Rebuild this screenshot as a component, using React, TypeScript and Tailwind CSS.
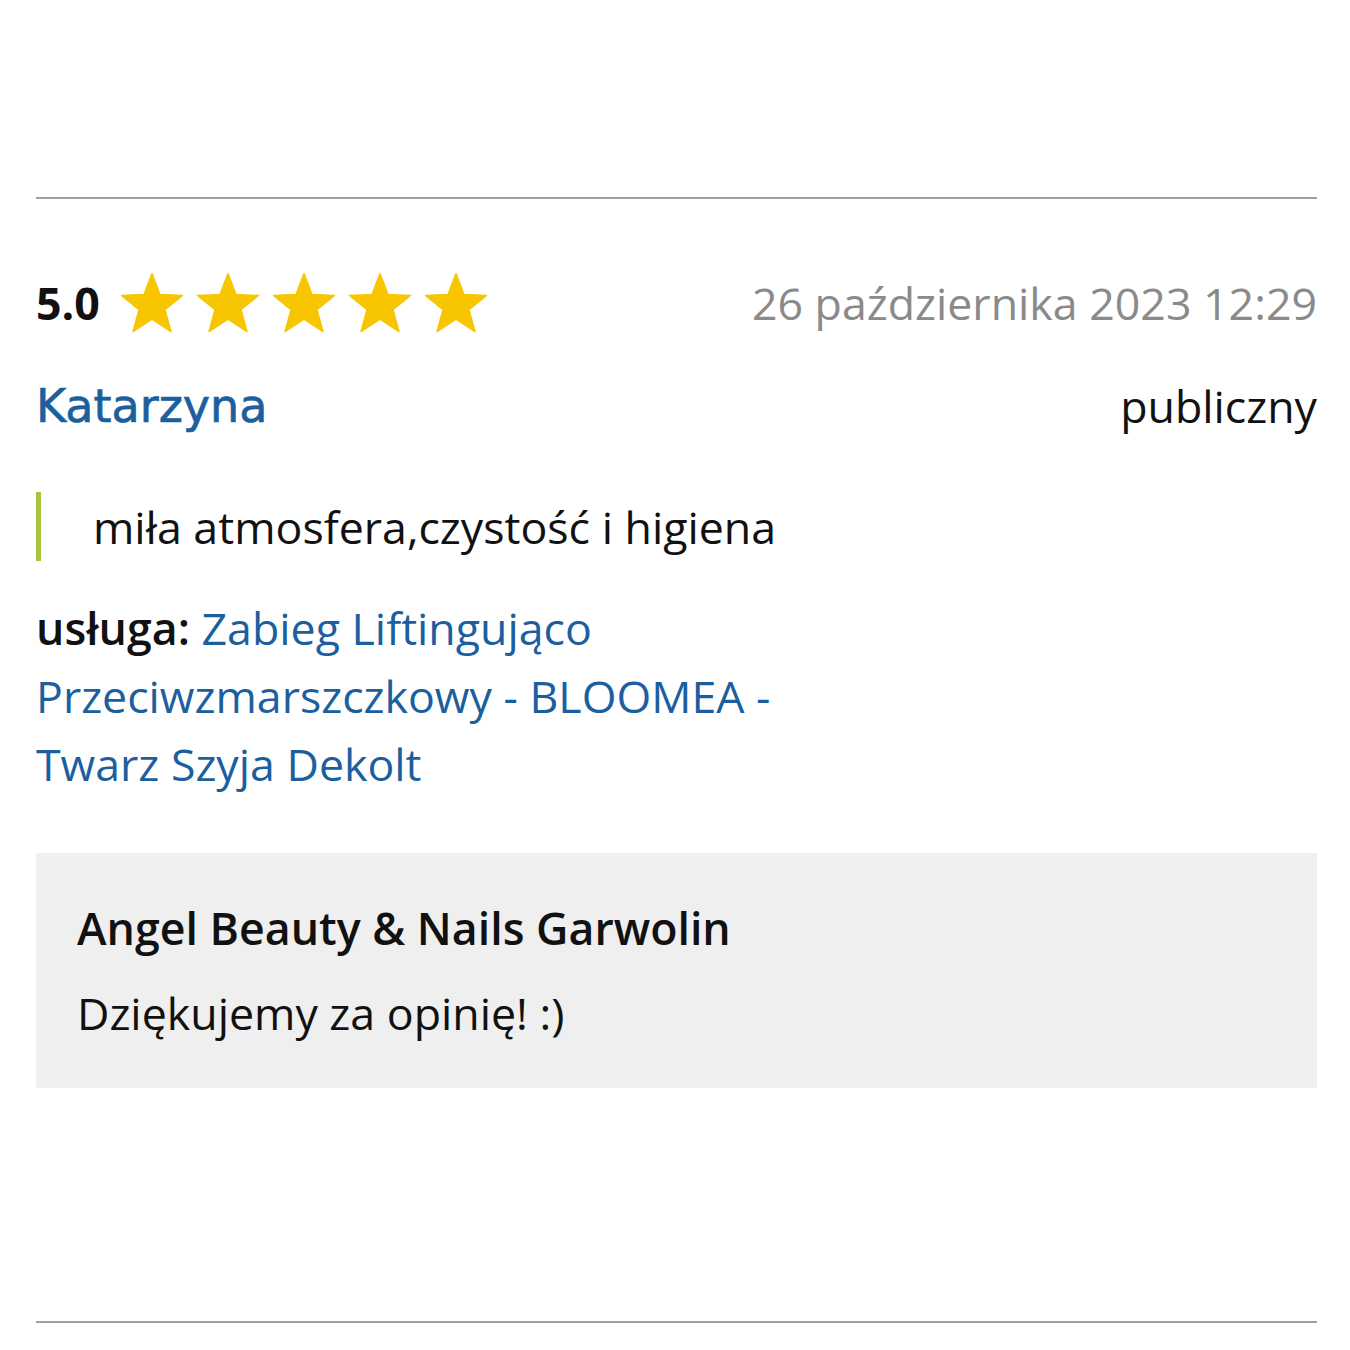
import React from "react";

function Star() {
  return (
    <svg width="64" height="61" viewBox="-1 -1 66 63" className="block">
      <path
        d="M32 0.5 L40.3 22.2 L63.5 23.3 L45.4 38 L51.6 60.5 L32 47.7 L12.4 60.5 L18.6 38 L0.5 23.3 L23.7 22.2 Z"
        fill="#f7c600"
        stroke="#f7c600"
        strokeWidth="1.5"
        strokeLinejoin="round"
      />
    </svg>
  );
}

export default function App() {
  return (
    <div
      className="w-[1350px] h-[1350px] bg-white px-[36px] pt-[197px] text-[#111]"
      style={{ fontFamily: '"Open Sans", "Noto Sans", sans-serif' }}
    >
      <div className="h-[2px] bg-[#a0a0a0] w-[1281px]" />
      <div className="w-[1281px] mt-[70px] text-[44.7px] leading-[68px]">
        <div className="flex items-center justify-between">
          <div className="flex items-center">
            <span className="font-bold">5.0</span>
            <div className="flex items-center gap-[12px] ml-[20px] mt-[-2px]">
              <Star />
              <Star />
              <Star />
              <Star />
              <Star />
            </div>
          </div>
          <span className="text-[#8a8a8a]">26 października 2023 12:29</span>
        </div>
        <div className="flex items-center justify-between mt-[35px] h-[68px]">
          <span className="font-['DejaVu_Sans',sans-serif] text-[46px] leading-[68px] text-[#1c5f9f] [-webkit-text-stroke:0.7px_#1c5f9f]">
            Katarzyna
          </span>
          <span>publiczny</span>
        </div>
        <div className="mt-[52px] border-l-[5px] border-[#a7c43a] pl-[52px] h-[69px] leading-[69px]">
          miła atmosfera,czystość i higiena
        </div>
        <div className="mt-[33px] w-[770px]">
          <span className="font-semibold">usługa: </span>
          <span className="text-[#1c5f9f]">
            Zabieg Liftingująco Przeciwzmarszczkowy - BLOOMEA - Twarz Szyja Dekolt
          </span>
        </div>
        <div className="mt-[55px] bg-[#efefef] pl-[41px] pt-[41px] pb-[41px]">
          <div className="font-semibold">Angel Beauty &amp; Nails Garwolin</div>
          <div className="mt-[17px]">Dziękujemy za opinię! :)</div>
        </div>
      </div>
      <div className="h-[2px] bg-[#a0a0a0] w-[1281px] mt-[233px]" />
    </div>
  );
}
